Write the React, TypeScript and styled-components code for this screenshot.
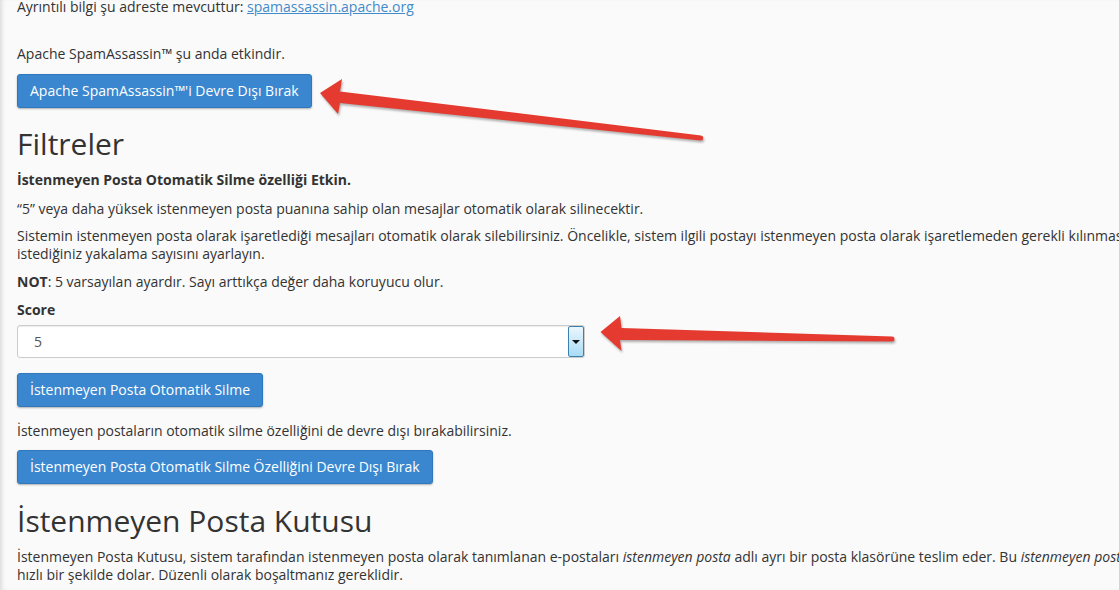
import React from "react";
import styled, { createGlobalStyle } from "styled-components";

const GlobalStyle = createGlobalStyle`
  html, body {
    margin: 0;
    padding: 0;
    background: #fafafa;
    overflow: hidden;
  }
  body {
    font-family: "Open Sans", "DejaVu Sans", sans-serif;
    font-size: 14px;
    line-height: 18px;
    color: #333;
  }
`;

const Page = styled.div`
  position: relative;
  width: 1119px;
  height: 590px;
  overflow: hidden;
  box-shadow: inset 4px 0 4px -2px rgba(0, 0, 0, 0.12);
`;

const Content = styled.main`
  display: flex;
  flex-direction: column;
  align-items: flex-start;
  padding-left: 17px;
  margin-top: -2px;
  width: 1400px;
`;

const Text = styled.p<{ $mt: number }>`
  margin: ${(p) => p.$mt}px 0 0;
  white-space: nowrap;
`;

const Line = styled.span`
  display: block;
  white-space: nowrap;
`;

const Link = styled.a`
  color: #428bca;
  text-decoration: underline;
`;

const Heading = styled.h2<{ $mt: number }>`
  margin: ${(p) => p.$mt}px 0 0;
  font-size: 30px;
  line-height: 33px;
  font-weight: 400;
  color: #333;
`;

const Label = styled.label<{ $mt: number }>`
  margin-top: ${(p) => p.$mt}px;
  font-weight: 700;
`;

const Button = styled.button<{ $mt: number }>`
  margin-top: ${(p) => p.$mt}px;
  padding: 6px 12px;
  font-family: inherit;
  font-size: 14px;
  line-height: 20px;
  color: #fff;
  background: #3a87cf;
  border: 1px solid #2f78bd;
  border-radius: 3px;
  box-shadow: 0 1px 2px rgba(0, 0, 0, 0.3);
  cursor: pointer;
`;

const Select = styled.div<{ $mt: number }>`
  margin-top: ${(p) => p.$mt}px;
  box-sizing: border-box;
  width: 568px;
  height: 33px;
  display: flex;
  align-items: stretch;
  justify-content: space-between;
  background: #fff;
  border: 1px solid #ccc;
  border-radius: 3px;
  box-shadow: inset 0 1px 1px rgba(0, 0, 0, 0.075);
`;

const SelectValue = styled.span`
  align-self: center;
  padding-left: 16px;
  color: #555;
`;

const DropButton = styled.span`
  box-sizing: border-box;
  width: 16px;
  display: flex;
  align-items: center;
  justify-content: center;
  border: 1px solid #3c7fb1;
  border-radius: 2px;
  background: linear-gradient(#eaf6fd, #a9dbf6);

  &::after {
    content: "";
    border-left: 4px solid transparent;
    border-right: 4px solid transparent;
    border-top: 4px solid #111;
  }
`;

const Overlay = styled.svg`
  position: absolute;
  top: 0;
  left: 0;
  pointer-events: none;
  filter: drop-shadow(1px 2px 1px rgba(0, 0, 0, 0.3));
`;

const ARROW = "#e53a2f";

export default function App() {
  return (
    <>
      <GlobalStyle />
      <Page>
        <Content>
          <Text $mt={0}>
            Ayrıntılı bilgi şu adreste mevcuttur:{" "}
            <Link href="#">spamassassin.apache.org</Link>
          </Text>
          <Text $mt={29}>Apache SpamAssassin™ şu anda etkindir.</Text>
          <Button $mt={11}>Apache SpamAssassin™'i Devre Dışı Bırak</Button>

          <Heading $mt={19}>Filtreler</Heading>
          <Text $mt={11}>
            <strong>İstenmeyen Posta Otomatik Silme özelliği Etkin.</strong>
          </Text>
          <Text $mt={11}>
            “5” veya daha yüksek istenmeyen posta puanına sahip olan mesajlar otomatik olarak silinecektir.
          </Text>
          <Text $mt={9}>
            <Line>
              Sistemin istenmeyen posta olarak işaretlediği mesajları otomatik olarak silebilirsiniz. Öncelikle, sistem ilgili postayı istenmeyen posta olarak işaretlemeden gerekli kılınmasını
            </Line>
            <Line>istediğiniz yakalama sayısını ayarlayın.</Line>
          </Text>
          <Text $mt={10}>
            <strong>NOT</strong>: 5 varsayılan ayardır. Sayı arttıkça değer daha koruyucu olur.
          </Text>
          <Label $mt={10}>Score</Label>
          <Select $mt={6}>
            <SelectValue>5</SelectValue>
            <DropButton />
          </Select>
          <Button $mt={15}>İstenmeyen Posta Otomatik Silme</Button>
          <Text $mt={15}>İstenmeyen postaların otomatik silme özelliğini de devre dışı bırakabilirsiniz.</Text>
          <Button $mt={10}>İstenmeyen Posta Otomatik Silme Özelliğini Devre Dışı Bırak</Button>

          <Heading $mt={20}>İstenmeyen Posta Kutusu</Heading>
          <Text $mt={11}>
            <Line>
              İstenmeyen Posta Kutusu, sistem tarafından istenmeyen posta olarak tanımlanan e-postaları{" "}
              <em>istenmeyen posta</em> adlı ayrı bir posta klasörüne teslim eder. Bu <em>istenmeyen posta</em> klasörü çok
            </Line>
            <Line>hızlı bir şekilde dolar. Düzenli olarak boşaltmanız gereklidir.</Line>
          </Text>
        </Content>

        <Overlay width="1119" height="590" viewBox="0 0 1119 590">
          <path
            d="M320 93 L342 79 L340 91.5 L701 135.5 A2.5 2.5 0 0 1 700.5 140.5 L340 103 L338 114 Z"
            fill={ARROW}
          />
          <path
            d="M600.5 332 L620 316 L621.5 328 L892 336.5 A2.5 2.5 0 0 1 892 341.5 L620 340 L621.5 351 Z"
            fill={ARROW}
          />
        </Overlay>
      </Page>
    </>
  );
}
